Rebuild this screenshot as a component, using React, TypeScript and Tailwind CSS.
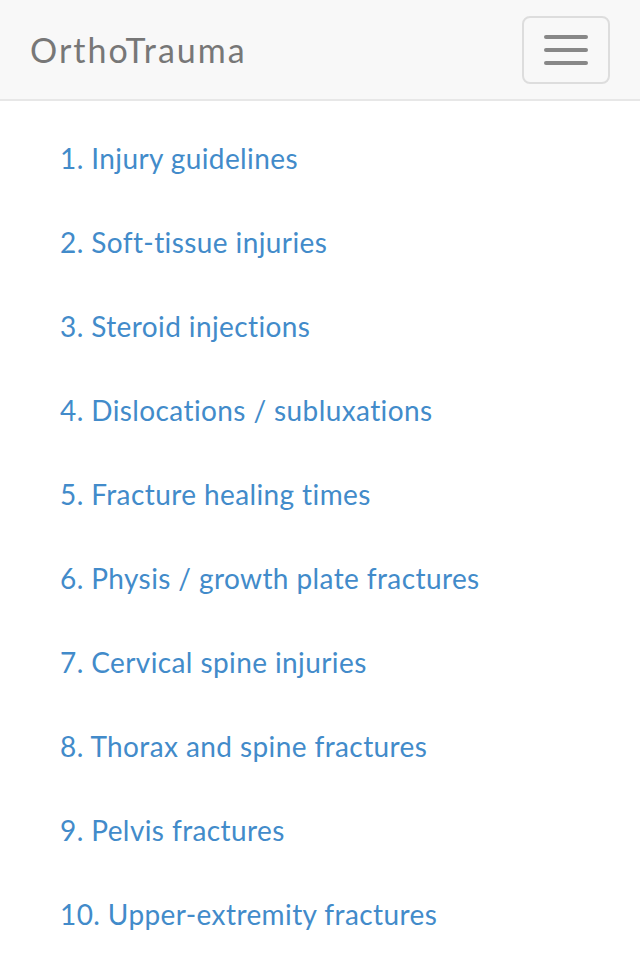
const items = [
  '1. Injury guidelines',
  '2. Soft-tissue injuries',
  '3. Steroid injections',
  '4. Dislocations / subluxations',
  '5. Fracture healing times',
  '6. Physis / growth plate fractures',
  '7. Cervical spine injuries',
  '8. Thorax and spine fractures',
  '9. Pelvis fractures',
  '10. Upper-extremity fractures',
]

export default function App() {
  return (
    <div className="min-h-[960px] bg-white" style={{ fontFamily: 'Lato, "Noto Sans", sans-serif' }}>
      {/* Navbar */}
      <div className="h-[101px] bg-[#f8f8f8] border-b-2 border-[#e7e7e7] flex items-center justify-between pl-[30px] pr-[30px]">
        <span className="text-[34px] text-[#777777] tracking-[2px]">OrthoTrauma</span>
        <button className="w-[88px] h-[68px] rounded-[8px] border-2 border-[#dddddd] flex flex-col items-center justify-center gap-[9px]">
          <span className="block w-[44px] h-[4px] rounded-full bg-[#888888]" />
          <span className="block w-[44px] h-[4px] rounded-full bg-[#888888]" />
          <span className="block w-[44px] h-[4px] rounded-full bg-[#888888]" />
        </button>
      </div>

      {/* List */}
      <ul className="pt-[15px] pl-[60px]">
        {items.map((item) => (
          <li key={item} className="h-[84px] flex items-center">
            <a className="text-[28px] text-[#428bca] tracking-[0.4px]">{item}</a>
          </li>
        ))}
      </ul>
    </div>
  )
}
